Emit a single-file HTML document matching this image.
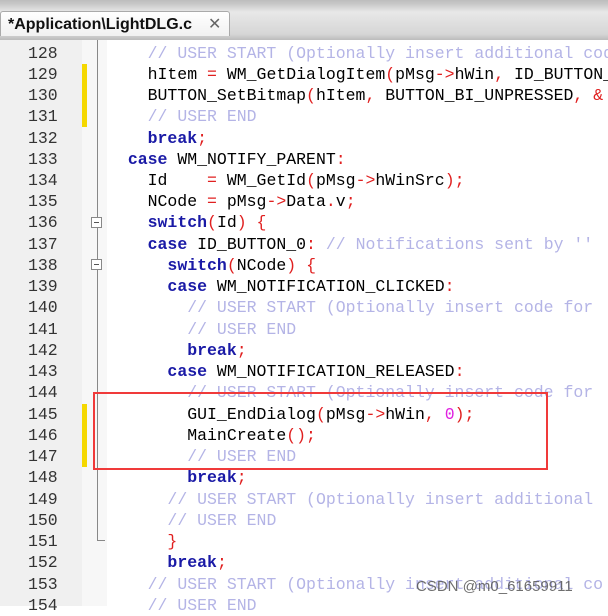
<!DOCTYPE html>
<html><head><meta charset="utf-8"><style>
html,body{margin:0;padding:0}
body{width:608px;height:606px;overflow:hidden;background:#fff;position:relative}
.topbar{position:absolute;left:0;top:0;width:608px;height:40px;background:linear-gradient(#bdbdbd 0,#c8c8c8 4px,#e8e8e8 12px,#d6d6d6 34px,#bcbcbc 40px)}
.tab{position:absolute;left:0;top:11px;width:230px;height:25px;background:linear-gradient(#fff,#f1f1f1);border:1px solid #aaa;border-bottom:none;border-radius:3px 3px 0 0;font-family:"Liberation Sans",sans-serif;font-weight:bold;font-size:16px;color:#111;line-height:25px;padding-left:7px;box-sizing:border-box;white-space:nowrap}
.tab .x{position:absolute;left:207px;top:0;font-weight:normal;color:#666;font-size:16px}
.nums{position:absolute;left:0;top:40px;width:82px;height:566px;background:#f0f0f0}
.marg{position:absolute;left:82px;top:40px;width:25px;height:566px;background:#f7f7f7}
.fline{position:absolute;left:97px;top:40px;width:1px;height:501px;background:#888}
.line{position:absolute;left:0;width:608px;height:21px;line-height:21px;font-size:16.5px;white-space:pre;font-family:"Liberation Mono","DejaVu Sans Mono","Courier New",monospace;overflow:hidden}
.n{position:absolute;left:28px;color:#333}
.c{position:absolute;left:108px}
.k{color:#1a1aa6;font-weight:bold}
.cm{color:#b4b4e6}
.o{color:#e02020}
.m{color:#e020e0}
.y{position:absolute;left:82px;width:5px;background:#f5d800}
.fb{position:absolute;left:91px;width:11px;height:11px;border:1px solid #888;background:#fff;box-sizing:border-box}
.fb:after{content:"";position:absolute;left:2px;top:4px;width:5px;height:1px;background:#555}
.box{position:absolute;left:93px;top:392px;width:455px;height:78px;border:2px solid #f03a3a;box-sizing:border-box}
.wm{position:absolute;left:416px;top:578px;font-family:"Liberation Sans",sans-serif;font-size:15px;color:#555;opacity:.85}
</style></head><body>
<div class="topbar"></div>
<div class="tab">*Application\LightDLG.c<span class="x">✕</span></div>
<div class="nums"></div><div class="marg"></div><div class="fline"></div>
<div class="y" style="top:64px;height:63px"></div>
<div class="y" style="top:404px;height:63px"></div>
<div class="fb" style="top:217px"></div>
<div class="fb" style="top:259px"></div>
<div style="position:absolute;left:97px;top:540px;width:8px;height:1px;background:#888"></div>
<div id="L"></div>
<script>
var L=[
[4,"<span class=cm>// USER START (Optionally insert additional code</span>"],
[4,"hItem <span class=o>=</span> WM_GetDialogItem<span class=o>(</span>pMsg<span class=o>-&gt;</span>hWin<span class=o>,</span> ID_BUTTON_0<span class=o>);</span>"],
[4,"BUTTON_SetBitmap<span class=o>(</span>hItem<span class=o>,</span> BUTTON_BI_UNPRESSED<span class=o>, &amp;</span>"],
[4,"<span class=cm>// USER END</span>"],
[4,"<span class=k>break</span><span class=o>;</span>"],
[2,"<span class=k>case</span> WM_NOTIFY_PARENT<span class=o>:</span>"],
[4,"Id    <span class=o>=</span> WM_GetId<span class=o>(</span>pMsg<span class=o>-&gt;</span>hWinSrc<span class=o>);</span>"],
[4,"NCode <span class=o>=</span> pMsg<span class=o>-&gt;</span>Data<span class=o>.</span>v<span class=o>;</span>"],
[4,"<span class=k>switch</span><span class=o>(</span>Id<span class=o>) {</span>"],
[4,"<span class=k>case</span> ID_BUTTON_0<span class=o>:</span> <span class=cm>// Notifications sent by ''</span>"],
[6,"<span class=k>switch</span><span class=o>(</span>NCode<span class=o>) {</span>"],
[6,"<span class=k>case</span> WM_NOTIFICATION_CLICKED<span class=o>:</span>"],
[8,"<span class=cm>// USER START (Optionally insert code for</span>"],
[8,"<span class=cm>// USER END</span>"],
[8,"<span class=k>break</span><span class=o>;</span>"],
[6,"<span class=k>case</span> WM_NOTIFICATION_RELEASED<span class=o>:</span>"],
[8,"<span class=cm>// USER START (Optionally insert code for</span>"],
[8,"GUI_EndDialog<span class=o>(</span>pMsg<span class=o>-&gt;</span>hWin<span class=o>,</span> <span class=m>0</span><span class=o>);</span>"],
[8,"MainCreate<span class=o>();</span>"],
[8,"<span class=cm>// USER END</span>"],
[8,"<span class=k>break</span><span class=o>;</span>"],
[6,"<span class=cm>// USER START (Optionally insert additional</span>"],
[6,"<span class=cm>// USER END</span>"],
[6,"<span class=o>}</span>"],
[6,"<span class=k>break</span><span class=o>;</span>"],
[4,"<span class=cm>// USER START (Optionally insert additional co</span>"],
[4,"<span class=cm>// USER END</span>"]
];
var h="";
for(var i=0;i<L.length;i++){
 var t=(53+21.24*i-10.5).toFixed(1);
 h+='<div class="line" style="top:'+t+'px"><span class="n">'+(128+i)+'</span><span class="c">'+" ".repeat(L[i][0])+L[i][1]+'</span></div>';
}
document.getElementById("L").innerHTML=h;
</script>
<div class="box"></div>
<div class="wm">CSDN @m0_61659911</div>
</body></html>
